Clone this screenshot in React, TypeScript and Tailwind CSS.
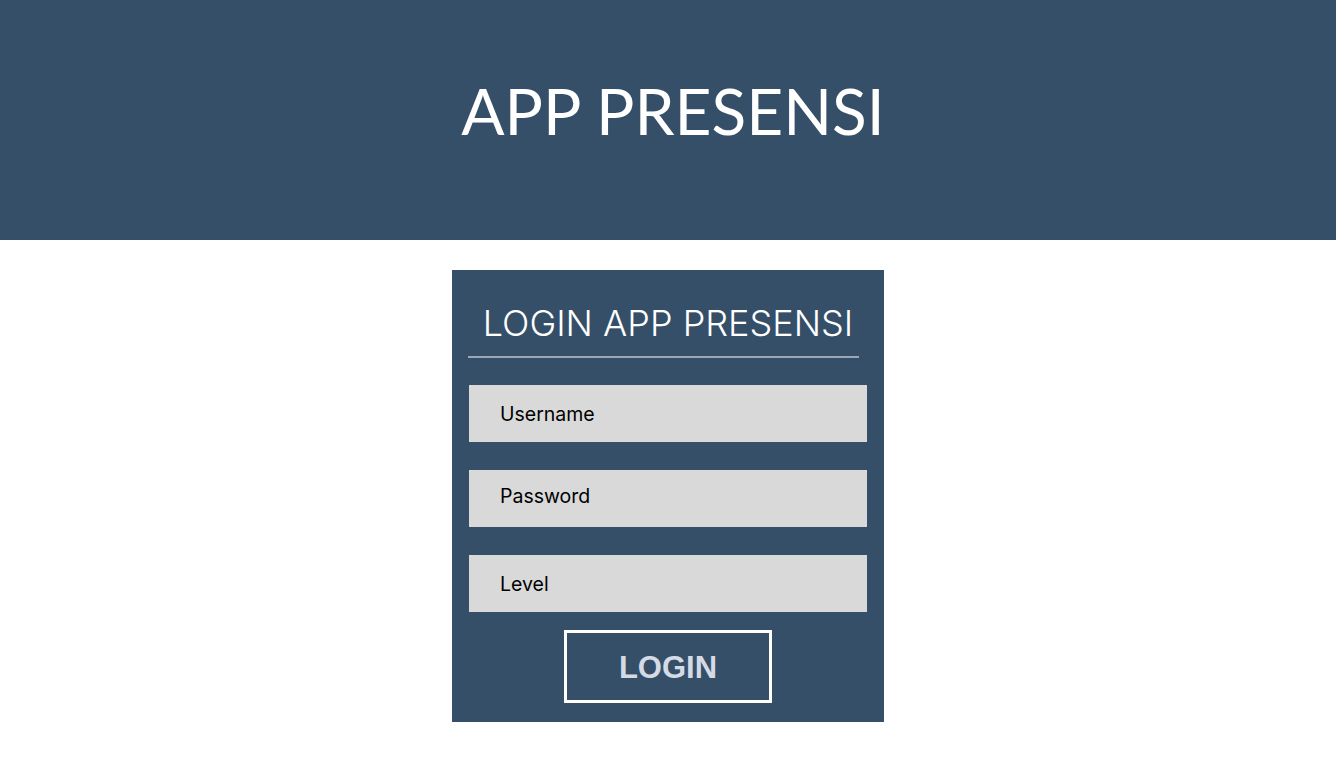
export default function App() {
  return (
    <div className="min-h-screen bg-white">
      {/* header */}
      <header className="flex h-[240px] items-center justify-center bg-[#354f69] pb-[18px] pl-[10px]">
        <h1 className="font-['Lato',sans-serif] text-[64px] font-normal text-white">
          APP PRESENSI
        </h1>
      </header>

      {/* login card */}
      <div className="mx-auto mt-[30px] h-[452px] w-[432px] bg-[#354f69] px-[17px] pt-[29px] font-['Inter',sans-serif]">
        <h2 className="text-center text-[36px] font-light leading-[48px] text-white">
          LOGIN APP PRESENSI
        </h2>
        <div className="ml-[-1px] mt-[9px] h-[2px] w-[391px] bg-[#9aa7b4]" />

        <div className="mt-[27px] flex h-[57px] items-center bg-[#d9d9d9] pl-[31px] pt-[3px] text-[19.5px] text-black">
          Username
        </div>
        <div className="mt-[28px] flex h-[57px] items-start bg-[#d9d9d9] pl-[31px] pt-[12px] text-[19.5px] text-black">
          Password
        </div>
        <div className="mt-[28px] flex h-[57px] items-center bg-[#d9d9d9] pl-[31px] pt-[3px] text-[19.5px] text-black">
          Level
        </div>

        <div className="mt-[18px] flex justify-center">
          <button className="flex h-[73px] w-[208px] items-center justify-center border-[3px] border-white pt-[3px] font-['Liberation_Sans',sans-serif] text-[31px] font-bold text-[#d4dbe5]">
            LOGIN
          </button>
        </div>
      </div>
    </div>
  );
}
